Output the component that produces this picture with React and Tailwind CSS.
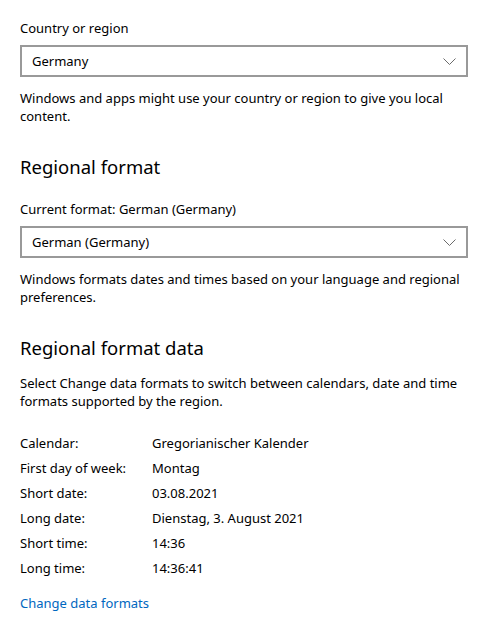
const Dropdown = ({ value }) => (
  <div className="flex items-center justify-between h-[32px] w-[448px] border-2 border-[#999999] pl-[10px] pr-[10px] text-black">
    <span>{value}</span>
    <svg width="13" height="7" viewBox="0 0 13 7" fill="none" stroke="#6b6b6b" strokeWidth="1">
      <path d="M0.5 0.5 L6.5 6.5 L12.5 0.5" />
    </svg>
  </div>
);

const rows = [
  ['Calendar:', 'Gregorianischer Kalender'],
  ['First day of week:', 'Montag'],
  ['Short date:', '03.08.2021'],
  ['Long date:', 'Dienstag, 3. August 2021'],
  ['Short time:', '14:36'],
  ['Long time:', '14:36:41'],
];

const App = () => {
  return (
    <div className="min-h-screen bg-white pl-[20px] pt-[19px] text-[13px] leading-[19px] text-black" style={{ fontFamily: '"Noto Sans", sans-serif' }}>
      <div>Country or region</div>
      <div className="mt-[7px]">
        <Dropdown value="Germany" />
      </div>
      <p className="mt-[12px] w-[450px] leading-[18px]">
        Windows and apps might use your country or region to give you local content.
      </p>

      <h2 className="mt-[28px] text-[18.5px] leading-[27px]">Regional format</h2>
      <div className="mt-[20px]">Current format: German (Germany)</div>
      <div className="mt-[7px]">
        <Dropdown value="German (Germany)" />
      </div>
      <p className="mt-[12px] w-[450px] leading-[18px]">
        Windows formats dates and times based on your language and regional preferences.
      </p>

      <h2 className="mt-[28px] text-[18.5px] leading-[27px]">Regional format data</h2>
      <p className="mt-[13px] w-[450px] leading-[18px]">
        Select Change data formats to switch between calendars, date and time formats supported by the region.
      </p>

      <div className="mt-[21px] flex flex-col">
        {rows.map(([label, value]) => (
          <div key={label} className="flex h-[25px] items-center">
            <span className="w-[132px]">{label}</span>
            <span>{value}</span>
          </div>
        ))}
      </div>

      <a href="#" className="mt-[13px] block text-[#0067c0]">Change data formats</a>
    </div>
  );
};

export default App;
